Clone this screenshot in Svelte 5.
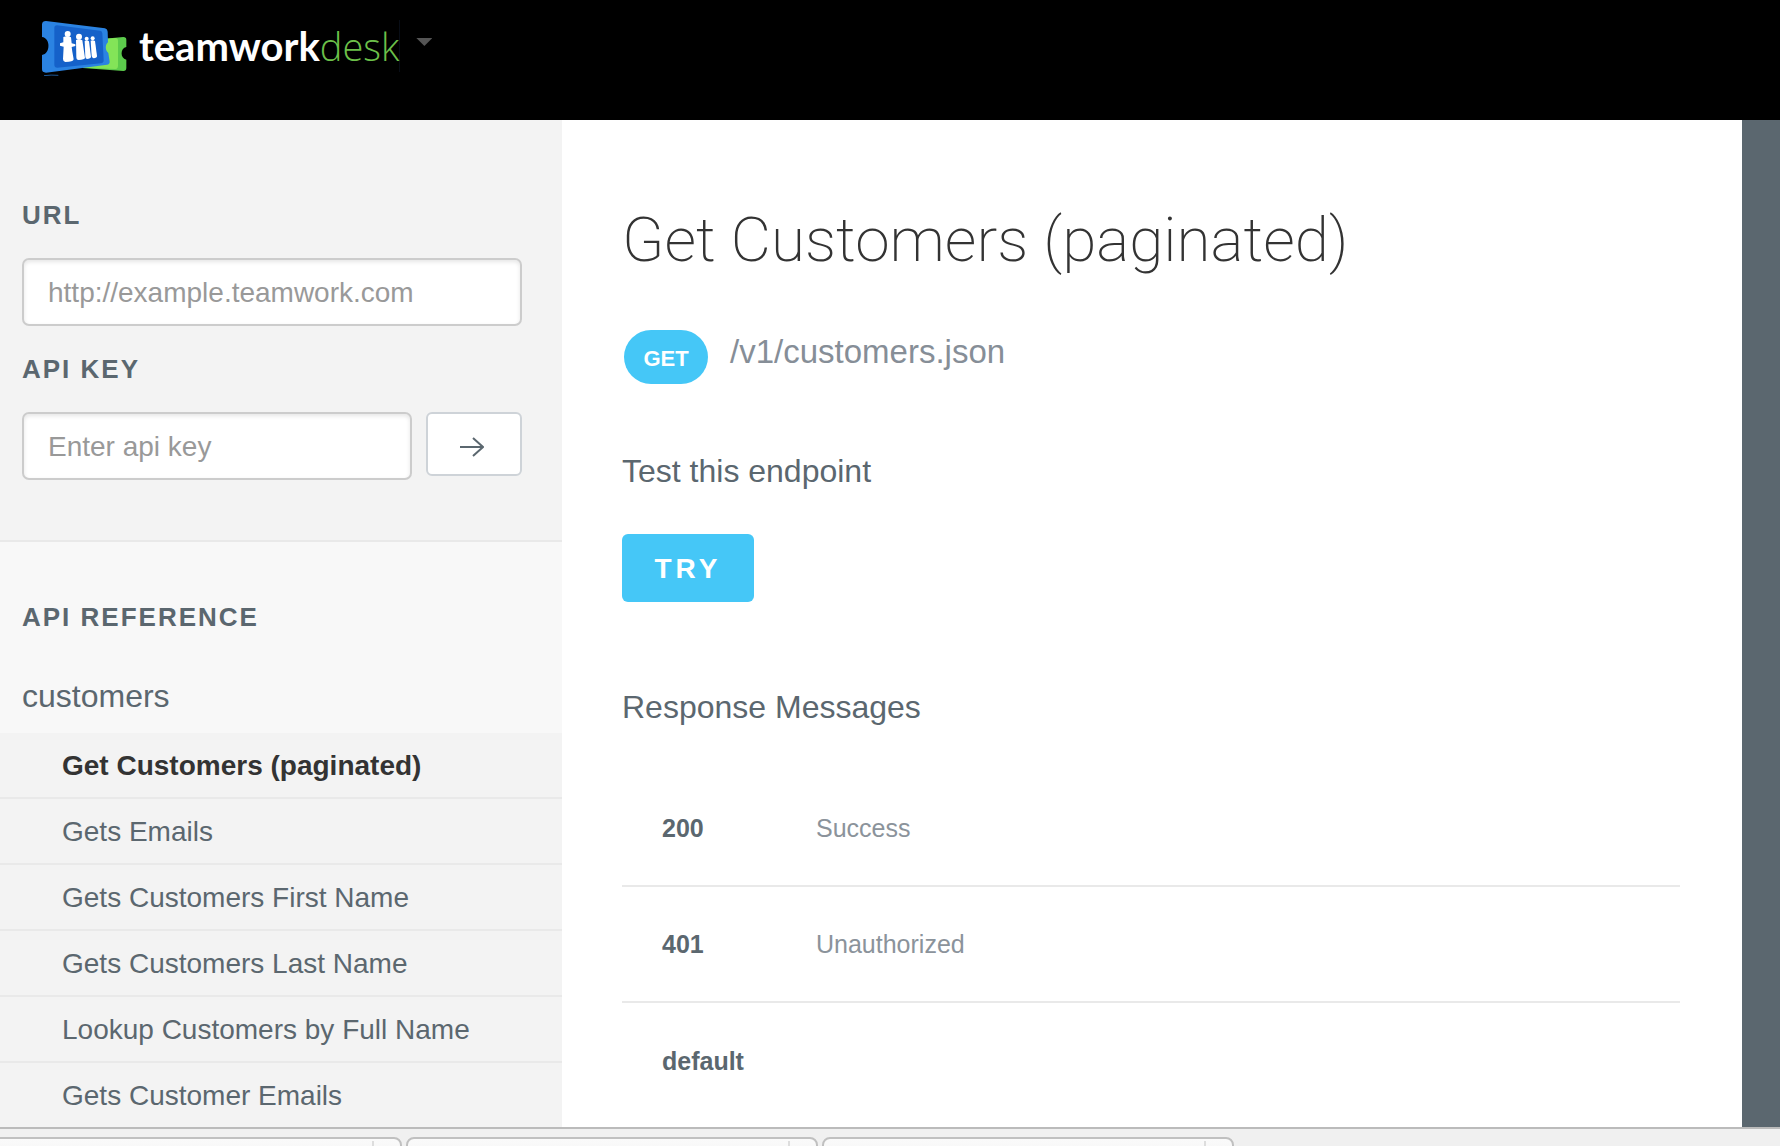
<script>
  const endpoints = [
    'Get Customers (paginated)',
    'Gets Emails',
    'Gets Customers First Name',
    'Gets Customers Last Name',
    'Lookup Customers by Full Name',
    'Gets Customer Emails'
  ];
  const responses = [
    { code: '200', text: 'Success' },
    { code: '401', text: 'Unauthorized' },
    { code: 'default', text: '' }
  ];
  const downloads = [1, 2, 3];

  let active = $state(0);
  let url = $state('');
  let apiKey = $state('');
</script>

<div class="page">
  <header>
    <a class="brand" href="#home" aria-label="teamworkdesk">
      <svg class="ticket" viewBox="18 18 255 168" aria-hidden="true">
        <path d="M205 74 L262 69 Q271 69 271 77 L271 99 C252 103 252 133 271 137 L271 162 Q271 171 262 171 L140 162 Z" fill="#5ccb4c" />
        <path d="M205 75 L238 72 Q246 72 246 80 L246 155 Q246 165 236 165 L140 161 Z" fill="#83e458" />
        <path d="M30 21 L207 43 Q215 45 215 53 L216 85 C207 91 207 110 217 117 L221 143 Q221 151 213 152 L30 176 Q18 176 18 166 L18 123 C44 119 44 72 18 69 L18 31 Q19 21 30 21 Z" fill="#2b83e2" />
        <path d="M63 34 L192 50 Q199 51 199 58 L203 139 Q203 147 195 148 L64 161 Q55 161 55 152 L55 42 Q55 34 63 34 Z" fill="#1561c9" />
        <g fill="#fff">
          <circle cx="95" cy="60" r="9" />
          <path d="M82 69 Q95 64 105 70 L107 88 L118 91 L118 96 L107 99 L109 113 L113 136 Q112 144 88 144 Q81 143 81 135 L83 98 L72 95 L72 88 L82 85 Z" />
          <circle cx="129" cy="68" r="9" />
          <path d="M120 78 Q130 73 139 79 L147 132 Q146 137 128 138 Q121 138 121 129 Z" />
          <circle cx="152" cy="74" r="6" />
          <path d="M146 81 Q153 78 159 82 L165 129 Q164 134 153 135 Q148 134 148 128 Z" />
          <circle cx="170" cy="73" r="6" />
          <path d="M164 80 Q171 77 177 81 L183 126 Q183 132 173 133 Q168 132 167 126 Z" />
        </g>
        <path d="M24 185 Q45 182 67 184" stroke="#2b83e2" stroke-width="2" fill="none" />
      </svg>
      <span class="wordmark"><b>teamwork</b>desk</span>
    </a>
    <button class="caret" aria-label="Switch product"></button>
  </header>

  <div class="body">
    <aside>
      <form class="credentials" onsubmit={(e) => e.preventDefault()}>
        <label for="url">URL</label>
        <input id="url" type="text" placeholder="http://example.teamwork.com" bind:value={url} />
        <label for="key">API KEY</label>
        <div class="key-row">
          <input id="key" type="text" placeholder="Enter api key" bind:value={apiKey} />
          <button class="go" aria-label="Submit">
            <svg viewBox="0 0 24 20" aria-hidden="true"><path d="M0 10H23M13 1L23 10L13 19" /></svg>
          </button>
        </div>
      </form>

      <nav>
        <h2>API REFERENCE</h2>
        <h3>customers</h3>
        <ul>
          {#each endpoints as name, i}
            <li>
              <a href="#endpoint-{i}" class:active={active === i} onclick={() => (active = i)}>{name}</a>
            </li>
          {/each}
        </ul>
      </nav>
    </aside>

    <main>
      <h1>Get Customers (paginated)</h1>
      <div class="endpoint">
        <span class="method">GET</span>
        <span class="path">/v1/customers.json</span>
      </div>
      <h4>Test this endpoint</h4>
      <button class="try">TRY</button>
      <h4>Response Messages</h4>
      <table>
        <tbody>
          {#each responses as r}
            <tr>
              <th scope="row">{r.code}</th>
              <td>{r.text}</td>
            </tr>
          {/each}
        </tbody>
      </table>
    </main>
    <div class="rail"></div>
  </div>

  <footer>
    {#each downloads as id (id)}
      <div class="download"></div>
    {/each}
  </footer>
</div>

<style>
  :global(body) {
    margin: 0;
    background: #fff;
  }
  .page {
    display: flex;
    flex-direction: column;
    min-height: 100vh;
    font-family: 'Liberation Sans', Arial, sans-serif;
    color: #5b676f;
  }
  .page :global(*) {
    box-sizing: border-box;
  }
  h1, h2, h3, h4, ul {
    margin: 0;
    padding: 0;
    font-weight: normal;
  }
  button, input {
    font-family: inherit;
    margin: 0;
  }

  header {
    display: flex;
    align-items: flex-start;
    height: 120px;
    padding: 20px 42px;
    background: #000;
  }
  .brand {
    display: flex;
    gap: 12px;
    text-decoration: none;
  }
  .ticket {
    width: 85px;
    height: 56px;
  }
  .wordmark {
    border-right: 1px solid #080d16;
    height: 52px;
    font: 300 38px/52px 'Open Sans', sans-serif;
    color: #6cc04a;
  }
  .wordmark b {
    font-family: Lato, sans-serif;
    font-size: 40px;
    font-weight: 700;
    color: #fff;
  }
  .caret {
    width: 16px;
    height: 8px;
    margin: 18px 0 0 16px;
    padding: 0;
    border: 0;
    background: #555;
    clip-path: polygon(0 0, 100% 0, 50% 100%);
  }

  .body {
    display: flex;
    flex: 1;
  }
  aside {
    flex: 0 0 562px;
    background: #f8f8f8;
  }
  .credentials {
    display: flex;
    flex-direction: column;
    padding: 80px 40px 60px 22px;
    background: #f3f3f3;
    border-bottom: 2px solid #e9e9e9;
  }
  label, h2 {
    font-size: 26px;
    font-weight: bold;
    line-height: 30px;
    letter-spacing: 2px;
  }
  label {
    margin-bottom: 28px;
  }
  input {
    width: 100%;
    height: 68px;
    margin-bottom: 28px;
    padding: 2px 24px 0;
    border: 2px solid #ccc;
    border-radius: 7px;
    background: #fff;
    box-shadow: inset 0 2px 4px rgba(0, 0, 0, 0.1);
    font-size: 28px;
    color: #444;
  }
  input::placeholder {
    color: #999;
    opacity: 1;
  }
  .key-row {
    display: flex;
    align-items: flex-start;
    gap: 14px;
  }
  .key-row input {
    flex: 1;
    min-width: 0;
    margin: 0;
  }
  .go {
    display: flex;
    align-items: center;
    justify-content: center;
    width: 96px;
    height: 64px;
    padding: 6px 4px 0 0;
    border: 2px solid #ced3d8;
    border-radius: 6px;
    background: #fff;
  }
  .go svg {
    width: 24px;
    height: 20px;
    fill: none;
    stroke: #5b676f;
    stroke-width: 2;
  }

  h2 {
    padding: 60px 22px 0;
  }
  h3 {
    padding: 46px 22px 19px;
    font-size: 32px;
    line-height: 36px;
  }
  ul {
    list-style: none;
  }
  li {
    background: #f3f3f3;
    border-bottom: 2px solid #e9e9e9;
  }
  li:last-child {
    border-bottom: 0;
  }
  li a {
    display: block;
    padding: 2px 62px 0;
    font-size: 28px;
    line-height: 62px;
    color: inherit;
    text-decoration: none;
  }
  li a.active {
    font-weight: bold;
    color: #333;
  }

  main {
    flex: 1;
    min-width: 0;
    padding: 80px 62px 0 60px;
    background: #fff;
  }
  h1 {
    font: 200 62px/80px Roboto, sans-serif;
    color: #333;
  }
  .endpoint {
    display: flex;
    gap: 22px;
    margin: 50px 0 69px 2px;
  }
  .method {
    width: 84px;
    padding-top: 4px;
    border-radius: 27px;
    background: #45c7f7;
    color: #fff;
    font-size: 22px;
    font-weight: bold;
    line-height: 50px;
    text-align: center;
  }
  .path {
    font-size: 33px;
    line-height: 44px;
    color: #868e97;
  }
  h4 {
    font-size: 32px;
    line-height: 36px;
  }
  .try {
    display: block;
    min-width: 132px;
    height: 68px;
    margin: 45px 0 87px;
    padding: 2px 32px 0;
    border: 0;
    border-radius: 6px;
    background: #45c7f7;
    color: #fff;
    font-size: 28px;
    font-weight: bold;
    letter-spacing: 4px;
  }
  table {
    width: 100%;
    margin-top: 45px;
    border-collapse: collapse;
    font-size: 25px;
    line-height: 28px;
  }
  tr {
    border-bottom: 2px solid #e9e9e9;
  }
  tr:last-child {
    border-bottom: 0;
  }
  th, td {
    height: 116px;
    padding: 0;
    text-align: left;
  }
  th {
    width: 194px;
    padding-left: 40px;
  }
  td {
    color: #8b939b;
  }
  .rail {
    flex: 0 0 38px;
    background: #5b676f;
  }

  footer {
    display: flex;
    gap: 4px;
    height: 20px;
    padding-top: 8px;
    overflow: hidden;
    border-top: 2px solid #bbb;
    background: #f0f0f0;
  }
  .download {
    flex: 0 0 412px;
    height: 48px;
    border: 2px solid #c0c0c0;
    border-radius: 8px;
    background: linear-gradient(#fafafa, #f0f0f0);
  }
  .download:first-child {
    margin-left: -10px;
  }
  .download::after {
    content: '';
    display: block;
    height: 40px;
    margin: 2px 26px 0 0;
    border-right: 2px solid #ddd;
  }
</style>
